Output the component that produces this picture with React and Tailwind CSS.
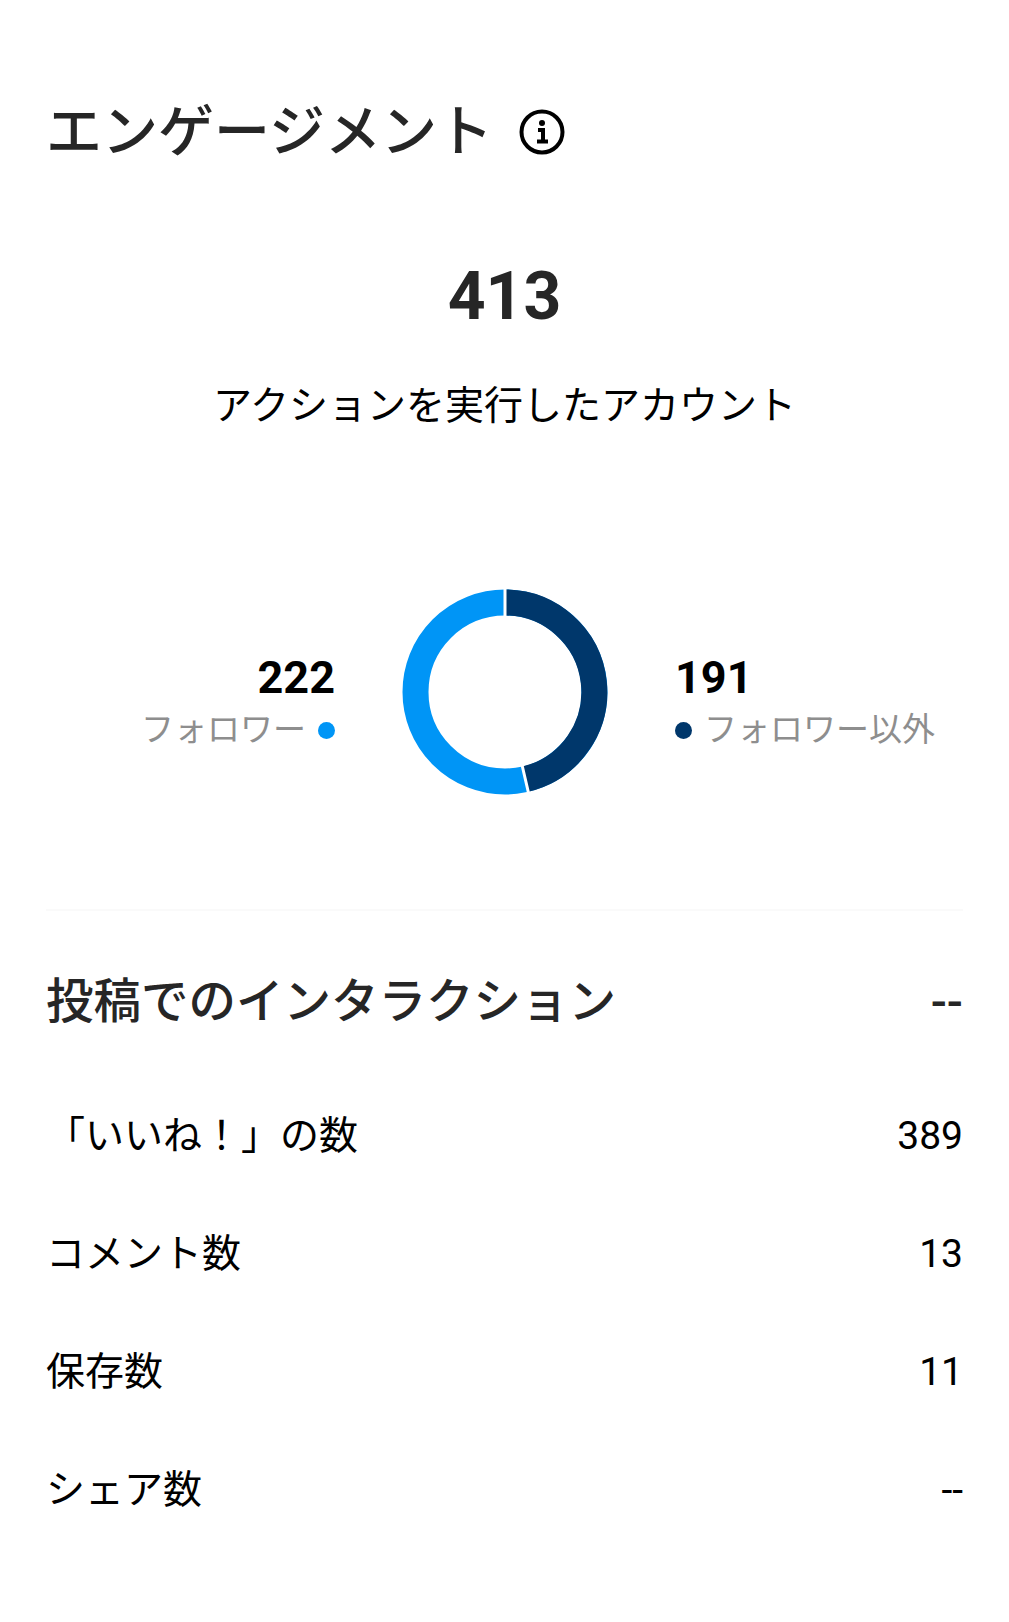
const ROWS = [
  { label: '「いいね！」の数', value: '389' },
  { label: 'コメント数', value: '13' },
  { label: '保存数', value: '11' },
  { label: 'シェア数', value: '--' },
];

export default function App() {
  return (
    <div className="h-[1622px] w-[1009px] bg-white font-[Roboto,'Noto_Sans_CJK_JP',sans-serif] text-black">
      <header className="flex items-center gap-[26px] pt-[92px] pl-[46px] text-[#262626]">
        <h1 className="text-[56px] leading-[80px] font-medium whitespace-nowrap">エンゲージメント</h1>
        <InfoIcon />
      </header>

      <section className="flex flex-col items-center">
        <div className="mt-[85px] text-[66px] leading-[80px] font-bold text-[#262626]">413</div>
        <p className="mt-[39px] text-[39px] leading-[60px]">アクションを実行したアカウント</p>
      </section>

      <Followers />

      <section className="mx-[46px] border-t-2 border-[#fafafa]">
        <div className="mt-[62px] flex h-[60px] items-center justify-between text-[47.5px] font-medium text-[#262626]">
          <h2 className="whitespace-nowrap">投稿でのインタラクション</h2>
          <span>--</span>
        </div>
        <div className="mt-[44px]">
          {ROWS.map((row) => (
            <div key={row.label} className="flex h-[118px] items-center justify-between text-[39px]">
              <span>{row.label}</span>
              <span>{row.value}</span>
            </div>
          ))}
        </div>
      </section>
    </div>
  );
}

function Followers() {
  return (
    <div className="mt-[153px] flex h-[320px] items-start">
      <div className="mt-[63px] flex w-[335px] flex-col items-end">
        <strong className="text-[45px] leading-[52px]">222</strong>
        <span className="flex items-center gap-[12px] text-[33px] leading-[52px] text-[#8e8e8e]">
          フォロワー
          <i className="size-[17px] rounded-full bg-[#0095f6]" />
        </span>
      </div>
      <Donut />
      <div className="mt-[63px] flex flex-col items-start">
        <strong className="text-[45px] leading-[52px]">191</strong>
        <span className="flex items-center gap-[12px] text-[33px] leading-[52px] text-[#8e8e8e]">
          <i className="size-[17px] rounded-full bg-[#00376b]" />
          フォロワー以外
        </span>
      </div>
    </div>
  );
}

function Donut() {
  return (
    <svg className="mr-[67px] ml-[67px] shrink-0" width="206" height="206" viewBox="-103 -103 206 206" fill="none">
      <circle r="89.5" stroke="#0095f6" strokeWidth="26" />
      <path d="M0 -89.5A89.5 89.5 0 0 1 20.4 87.1" stroke="#00376b" strokeWidth="26" />
      <path d="M0 -104V-74M16.8 72L24 103" stroke="#fff" strokeWidth="3" />
    </svg>
  );
}

function InfoIcon() {
  return (
    <svg width="46" height="46" viewBox="0 0 46 46" fill="none" className="text-black">
      <circle cx="23" cy="23" r="20.5" stroke="currentColor" strokeWidth="4" />
      <circle cx="23" cy="14" r="3" fill="currentColor" />
      <path d="M19 21H24V32M18 32.5H29" stroke="currentColor" strokeWidth="4" />
    </svg>
  );
}
